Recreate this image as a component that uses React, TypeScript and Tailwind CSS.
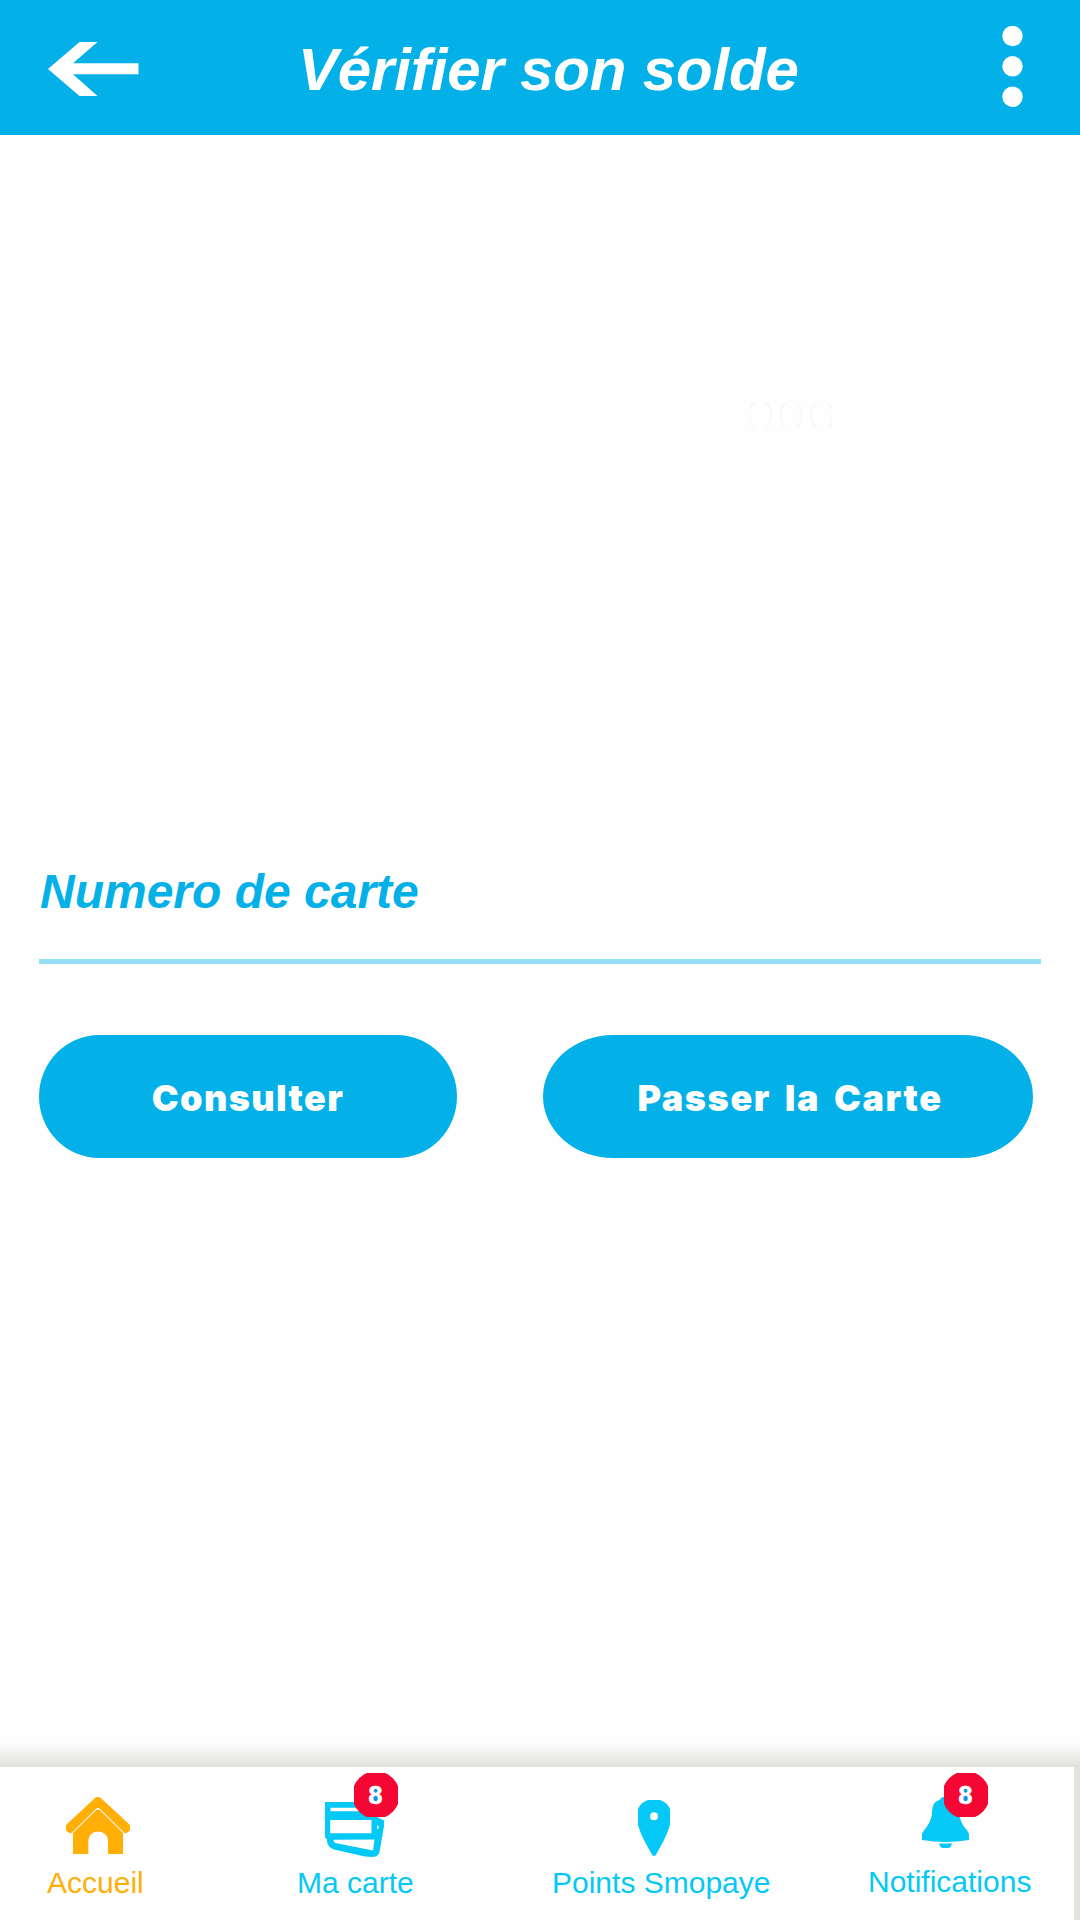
import React from "react";

function BackArrow() {
  return (
    <svg width="91" height="54" viewBox="0 0 91 54" fill="#fff">
      <path d="M31.5 0H49.5L25 21.3H90.5V32.3H25L49.5 54H31.5L0 27Z" />
    </svg>
  );
}

function MenuDots() {
  return (
    <svg width="21" height="81" viewBox="0 0 21 81" fill="#fff">
      <circle cx="10.5" cy="10" r="10.2" />
      <circle cx="10.5" cy="40.3" r="10.2" />
      <circle cx="10.5" cy="70.8" r="10.2" />
    </svg>
  );
}

function FaintDots() {
  return (
    <svg width="82" height="25" viewBox="0 0 82 25" fill="none" stroke="#f8f8f8" strokeWidth="2">
      <ellipse cx="10" cy="12.5" rx="11" ry="14.5" />
      <ellipse cx="41" cy="12.5" rx="10.5" ry="14.5" />
      <ellipse cx="72" cy="12.5" rx="11" ry="14.5" />
    </svg>
  );
}

function HouseIcon() {
  return (
    <svg width="64" height="57" viewBox="0 0 64 57" fill="#ffaf06">
      <path d="M29.5 0.5Q32 -0.8 34.5 0.8L64 28V33.5L60.5 36Q58.8 36.6 57 35L35 13Q32 9.8 29 13L7 35Q5.2 36.6 3.5 36L0 33.5V28Z" />
      <path d="M32 11.2L57 36V57H42V44Q41.5 35.2 32 34.6Q22.8 35.2 22.3 44V57H7V36Z" />
      <path d="M5.5 36.2L29 13Q32 10 35 13L58.5 36.2" fill="none" stroke="#f0e4c4" strokeWidth="1" />
      <path d="M29.5 12.8Q32 9.2 34.5 12.8Z" fill="#fefefe" />
    </svg>
  );
}

function CardIcon() {
  return (
    <svg width="59" height="55" viewBox="0 0 59 55">
      <path
        fill="#04c8f5"
        fillRule="evenodd"
        d="M0 0H52V15L59 18.5V24L54.5 50Q53.5 55 47 55L40 54.5L9 47.5Q2 45.5 1.8 37L0 35.5ZM5.5 5.7V9.3H46V5.7ZM5.2 18V31.3H46.5V18ZM8.5 37.8Q8.3 40.5 10.5 41L48 48.5L49.5 37.5ZM52 22.8V27.5L54.2 25.2Z"
      />
    </svg>
  );
}

function PinIcon() {
  return (
    <svg width="32" height="56" viewBox="0 0 32 56">
      <path
        fill="#04c8f5"
        fillRule="evenodd"
        d="M10 0H22Q29 2.2 32 9V25Q29.5 33 25.5 41L17.8 55Q16 57 14.2 55L6.5 41Q2 32.5 0 25V9Q3 2.2 10 0ZM20 16.3A4 4 0 1 0 12 16.3A4 4 0 1 0 20 16.3Z"
      />
    </svg>
  );
}

function BellIcon() {
  return (
    <svg width="47" height="51" viewBox="0 0 47 51" fill="#04c8f5">
      <path d="M20.5 0H26Q28 3 32 4.5Q37 7.5 37.3 18Q38.5 25 43 31Q46 34 47 37V43Q35 45 23.5 45Q12 45 0 43V37Q1 34 4 31Q8.5 25 9.7 19Q10 7.5 13.5 5Q18.5 2.5 20.5 0Z" />
      <path d="M17.2 46.5H30Q29 51 25.5 51H21.5Q18 51 17.2 46.5Z" />
    </svg>
  );
}

function Badge() {
  return (
    <span className="absolute top-[6px] flex h-[44px] w-[44px] items-center justify-center">
      <svg className="absolute inset-0" width="44" height="44" viewBox="0 0 44 44">
        <circle cx="22" cy="22" r="23.8" fill="#f50733" />
        <rect x="18.5" y="15" width="6" height="14" fill="#1694dd" />
      </svg>
      <span className="relative -left-[0.5px] text-[25px] leading-none font-bold text-white [-webkit-text-stroke:0.6px_white]">
        8
      </span>
    </span>
  );
}

export default function App() {
  return (
    <div className="flex h-[1920px] w-[1080px] flex-col overflow-hidden bg-[#fefefe] font-['Liberation_Sans',Arial,sans-serif]">
      <header className="flex h-[135px] shrink-0 items-start bg-[#03b1e8] text-white">
        <button className="mt-[42px] ml-[48px]">
          <BackArrow />
        </button>
        <h1 className="mt-[40px] ml-[159px] w-[520px] text-[60px] leading-none font-bold tracking-[-0.15px] whitespace-nowrap italic">
          Vérifier son solde
        </h1>
        <button className="mt-[26px] ml-[184px]">
          <MenuDots />
        </button>
      </header>

      <main className="flex flex-1 flex-col">
        <div className="mt-[268px] ml-[750px] h-[25px]">
          <FaintDots />
        </div>
        <label className="mt-[439px] ml-[39px] flex h-[97px] w-[1002px] items-start border-b-[5px] border-[#93dff5] pt-px pl-px text-[48px] leading-none font-bold text-[#03b1e8] italic">
          Numero de carte
        </label>
        <div className="mt-[71px] ml-[39px] flex h-[123px] gap-[86px] font-['Inter','Liberation_Sans',sans-serif] text-[36px] leading-none font-black text-white">
          <button className="w-[418px] rounded-[60px/61.5px] bg-[#03b1e8] pt-[2px] tracking-[1.4px]">Consulter</button>
          <button className="w-[490px] rounded-[70px/61.5px] bg-[#03b1e8] pt-[2px] pl-[4px] tracking-[1.6px] [word-spacing:5px]">
            Passer la Carte
          </button>
        </div>
      </main>

      <div className="h-[24px] shrink-0 bg-linear-to-b from-[#fefefe] via-[#eeeeed] to-[#e1e1df]" />
      <nav className="flex h-[153px] w-full shrink-0 border-r-[6px] border-[#e3e3e2] bg-[#fefefe] text-[30px] leading-none whitespace-nowrap text-[#04c8f5]">
        <a className="w-[240px] shrink-0 text-[#ffaf06]">
          <div className="flex h-[101px] pt-[30px] pl-[66px]">
            <HouseIcon />
          </div>
          <div className="pl-[47px]">Accueil</div>
        </a>
        <a className="relative w-[280px] shrink-0">
          <div className="flex h-[101px] pt-[35px] pl-[85px]">
            <CardIcon />
          </div>
          <div className="absolute top-0 left-[114px]">
            <Badge />
          </div>
          <div className="pl-[57px]">Ma carte</div>
        </a>
        <a className="w-[300px] shrink-0">
          <div className="flex h-[101px] pt-[33px] pl-[118px]">
            <PinIcon />
          </div>
          <div className="pl-[32px]">Points Smopaye</div>
        </a>
        <a className="relative w-[254px] shrink-0">
          <div className="flex h-[100px] pt-[30px] pl-[102px]">
            <BellIcon />
          </div>
          <div className="absolute top-0 left-[124px]">
            <Badge />
          </div>
          <div className="pl-[48px]">Notifications</div>
        </a>
      </nav>
    </div>
  );
}
